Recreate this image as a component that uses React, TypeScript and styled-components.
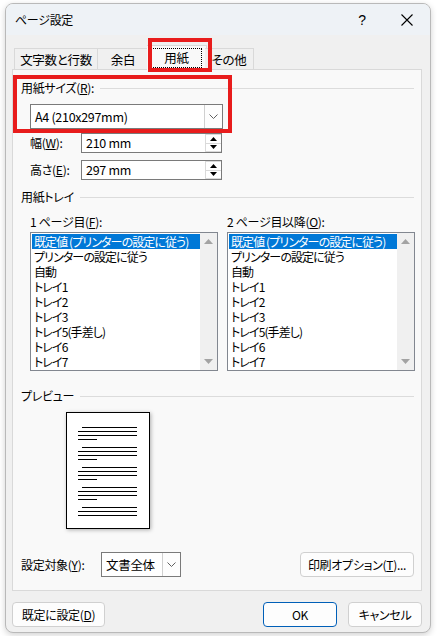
import React from 'react';
import styled, { createGlobalStyle } from 'styled-components';

const GlobalStyle = createGlobalStyle`
  html, body {
    margin: 0;
    padding: 0;
    background: #ffffff;
  }
  body {
    font-family: 'Noto Sans CJK JP', 'Noto Sans', sans-serif;
    font-size: 12px;
    font-feature-settings: 'palt';
    letter-spacing: -0.3px;
    color: #000;
  }
`;

const Screen = styled.div`
  width: 437px;
  height: 636px;
  padding: 3px 0 0 5px;
  box-sizing: border-box;
`;

const Window = styled.div`
  position: relative;
  width: 426px;
  height: 630px;
  box-sizing: border-box;
  border: 1px solid #b9b9b9;
  border-radius: 8px;
  background: #f0f0f0;
  box-shadow: 0 2px 6px rgba(0, 0, 0, 0.18);
  display: flex;
  flex-direction: column;
  overflow: hidden;
`;

const TitleBar = styled.div`
  height: 31px;
  flex: none;
  background: #eef2f6;
  display: flex;
  align-items: center;
  padding: 0 0 0 9px;
`;

const Title = styled.div`
  flex: 1;
  line-height: 16px;
`;

const TitleButton = styled.div<{ $w: number }>`
  width: ${p => p.$w}px;
  height: 31px;
  display: flex;
  align-items: center;
  justify-content: center;
  font-family: 'Liberation Sans', sans-serif;
  font-size: 14px;
`;

const Body = styled.div`
  flex: 1;
  display: flex;
  flex-direction: column;
  padding: 8px 8px 0 6px;
`;

const TabStrip = styled.div`
  display: flex;
  align-items: flex-end;
  height: 27px;
  padding-left: 2px;
  margin-bottom: -1px;
  position: relative;
  z-index: 1;
`;

const Tab = styled.div<{ $w: number; $active?: boolean }>`
  width: ${p => p.$w}px;
  height: ${p => (p.$active ? 25 : 22)}px;
  box-sizing: border-box;
  border: 1px solid #d9d9d9;
  border-bottom: ${p => (p.$active ? 'none' : '1px solid #d9d9d9')};
  margin: ${p => (p.$active ? '0 -2px' : '0')};
  background: ${p => (p.$active ? '#f9f9f9' : '#f0f0f0')};
  display: flex;
  align-items: center;
  justify-content: center;
  line-height: 16px;
  font-size: 12.5px;
  padding-top: ${p => (p.$active ? 0 : 1)}px;
  & + & {
    border-left: none;
  }
`;

const FocusRect = styled.span`
  border: 1px dotted #000;
  padding: 1px 12px;
`;

const Panel = styled.div`
  width: 410px;
  height: 522px;
  box-sizing: border-box;
  border: 1px solid #d9d9d9;
  background: #f9f9f9;
  padding: 10px 7px 0 8px;
  display: flex;
  flex-direction: column;
`;

const Heading = styled.div<{ $mt?: number }>`
  display: flex;
  align-items: center;
  gap: 6px;
  height: 16px;
  line-height: 16px;
  margin-top: ${p => p.$mt ?? 0}px;
  &::after {
    content: '';
    flex: 1;
    height: 1px;
    background: #dcdcdc;
  }
`;

const Indented = styled.div<{ $mt?: number }>`
  margin-left: 9px;
  margin-top: ${p => p.$mt ?? 0}px;
`;

const Combo = styled.div<{ $w: number; $h: number }>`
  width: ${p => p.$w}px;
  height: ${p => p.$h}px;
  box-sizing: border-box;
  border: 1px solid #7a7a7a;
  background: #fff;
  display: flex;
  align-items: stretch;
`;

const ComboText = styled.div`
  flex: 1;
  display: flex;
  align-items: center;
  padding-left: 4px;
  line-height: 16px;
  font-size: 12.5px;
  white-space: nowrap;
`;

const ComboButton = styled.div`
  width: 17px;
  border-left: 1px solid #d0d0d0;
  display: flex;
  align-items: center;
  justify-content: center;
  background: #fdfdfd;
`;

const FieldRow = styled.div<{ $mt: number }>`
  display: flex;
  align-items: center;
  height: 20px;
  margin-top: ${p => p.$mt}px;
`;

const FieldLabel = styled.div`
  width: 51px;
  line-height: 16px;
`;

const Spin = styled.div`
  width: 141px;
  height: 20px;
  box-sizing: border-box;
  border: 1px solid #7a7a7a;
  background: #fff;
  display: flex;
`;

const SpinText = styled.div`
  flex: 1;
  padding-left: 4px;
  line-height: 18px;
  font-size: 12.5px;
`;

const SpinButtons = styled.div`
  width: 16px;
  display: flex;
  flex-direction: column;
`;

const SpinHalf = styled.div`
  flex: 1;
  border: 1px solid #dadada;
  border-right: none;
  display: flex;
  align-items: center;
  justify-content: center;
  & + & {
    border-top: none;
  }
`;

const TrayGrid = styled.div`
  display: grid;
  grid-template-columns: 188px 188px;
  column-gap: 9px;
  margin: 9px 0 0 9px;
`;

const TrayLabel = styled.div`
  line-height: 16px;
  height: 16px;
  margin-bottom: 2px;
  white-space: nowrap;
`;

const ListBox = styled.div`
  height: 139px;
  box-sizing: border-box;
  border: 1px solid #828790;
  background: #fff;
  display: flex;
`;

const ListItems = styled.div`
  flex: 1;
  padding: 1px 0 0 1px;
  overflow: hidden;
`;

const ListItem = styled.div<{ $selected?: boolean }>`
  height: 15px;
  line-height: 15px;
  padding-left: 2px;
  letter-spacing: -0.9px;
  white-space: nowrap;
  background: ${p => (p.$selected ? '#0078d7' : 'transparent')};
  color: ${p => (p.$selected ? '#fff' : '#000')};
`;

const ScrollBar = styled.div`
  width: 17px;
  background: #f0f0f0;
  display: flex;
  flex-direction: column;
  justify-content: space-between;
  align-items: center;
  padding: 6px 0;
`;

const PreviewPage = styled.div`
  width: 84px;
  height: 117px;
  box-sizing: border-box;
  border: 1px solid #000;
  background: #fff;
  box-shadow: 1px 1px 4px rgba(0, 0, 0, 0.3);
  margin: 8px 0 0 45px;
`;

const BottomRow = styled.div`
  display: flex;
  align-items: center;
  margin-top: 23px;
  height: 25px;
`;

const TargetLabel = styled.div`
  width: 80px;
  line-height: 16px;
  white-space: nowrap;
`;

const Spacer = styled.div`
  flex: 1;
`;

const Button = styled.div<{ $w: number; $primary?: boolean }>`
  width: ${p => p.$w}px;
  height: 25px;
  box-sizing: border-box;
  border: 1px solid ${p => (p.$primary ? '#005fb8' : '#d0d0d0')};
  border-radius: 4px;
  background: #fdfdfd;
  display: flex;
  align-items: center;
  justify-content: center;
  line-height: 16px;
  white-space: nowrap;
`;

const Footer = styled.div`
  display: flex;
  align-items: center;
  height: 25px;
  margin-top: 11px;
  gap: 11px;
`;

const Highlight = styled.div<{ $l: number; $t: number; $w: number; $h: number }>`
  position: absolute;
  left: ${p => p.$l}px;
  top: ${p => p.$t}px;
  width: ${p => p.$w}px;
  height: ${p => p.$h}px;
  box-sizing: border-box;
  border: 4px solid #e81c1c;
  pointer-events: none;
  z-index: 5;
`;

const Chevron = () => (
  <svg width="9" height="5" viewBox="0 0 9 5">
    <path d="M0.5 0.5 L4.5 4.5 L8.5 0.5" fill="none" stroke="#606060" strokeWidth="1" />
  </svg>
);

const Tri = ({ up, color, w, h }: { up?: boolean; color: string; w: number; h: number }) => (
  <svg width={w} height={h} viewBox={`0 0 ${w} ${h}`}>
    <polygon points={up ? `0,${h} ${w / 2},0 ${w},${h}` : `0,0 ${w},0 ${w / 2},${h}`} fill={color} />
  </svg>
);

const U = ({ children }: { children: React.ReactNode }) => <u>{children}</u>;

const trayItems = [
  '既定値 (プリンターの設定に従う)',
  'プリンターの設定に従う',
  '自動',
  'トレイ1',
  'トレイ2',
  'トレイ3',
  'トレイ5(手差し)',
  'トレイ6',
  'トレイ7',
];

const TrayList = () => (
  <ListBox>
    <ListItems>
      {trayItems.map((t, i) => (
        <ListItem key={t} $selected={i === 0}>
          {t}
        </ListItem>
      ))}
    </ListItems>
    <ScrollBar>
      <Tri up color="#a3a3a3" w={9} h={5} />
      <Tri color="#a3a3a3" w={9} h={5} />
    </ScrollBar>
  </ListBox>
);

const PageLines = () => {
  const lines: React.ReactNode[] = [];
  for (let g = 0; g < 5; g++) {
    const y0 = 14.5 + g * 20;
    const count = g === 4 ? 3 : 4;
    for (let i = 0; i < count; i++) {
      const x1 = i === 0 ? 15 : 11;
      const x2 = i === 3 ? 30 : 70;
      lines.push(
        <line key={`${g}-${i}`} x1={x1} x2={x2} y1={y0 + i * 4} y2={y0 + i * 4} stroke="#000" strokeWidth="1" />
      );
    }
  }
  return (
    <svg width="82" height="115" viewBox="0 0 82 115">
      {lines}
    </svg>
  );
};

const SpinField = ({ value }: { value: string }) => (
  <Spin>
    <SpinText>{value}</SpinText>
    <SpinButtons>
      <SpinHalf>
        <Tri up color="#000" w={7} h={4} />
      </SpinHalf>
      <SpinHalf>
        <Tri color="#000" w={7} h={4} />
      </SpinHalf>
    </SpinButtons>
  </Spin>
);

export default function App() {
  return (
    <>
      <GlobalStyle />
      <Screen>
        <Window>
          <TitleBar>
            <Title>ページ設定</Title>
            <TitleButton $w={44}>?</TitleButton>
            <TitleButton $w={46}>
              <svg width="12" height="12" viewBox="0 0 12 12">
                <path d="M0.5 0.5 L11.5 11.5 M11.5 0.5 L0.5 11.5" stroke="#000" strokeWidth="1.1" />
              </svg>
            </TitleButton>
          </TitleBar>
          <Body>
            <TabStrip>
              <Tab $w={84}>文字数と行数</Tab>
              <Tab $w={51}>余白</Tab>
              <Tab $w={60} $active>
                <FocusRect>用紙</FocusRect>
              </Tab>
              <Tab $w={49}>その他</Tab>
            </TabStrip>
            <Panel>
              <Heading>
                <span>
                  用紙サイズ(<U>R</U>):
                </span>
              </Heading>
              <Indented $mt={8}>
                <Combo $w={193} $h={25}>
                  <ComboText>A4 (210x297mm)</ComboText>
                  <ComboButton>
                    <Chevron />
                  </ComboButton>
                </Combo>
              </Indented>
              <Indented>
                <FieldRow $mt={4}>
                  <FieldLabel>
                    幅(<U>W</U>):
                  </FieldLabel>
                  <SpinField value="210 mm" />
                </FieldRow>
                <FieldRow $mt={7}>
                  <FieldLabel>
                    高さ(<U>E</U>):
                  </FieldLabel>
                  <SpinField value="297 mm" />
                </FieldRow>
              </Indented>
              <Heading $mt={9}>
                <span>用紙トレイ</span>
              </Heading>
              <TrayGrid>
                <div>
                  <TrayLabel>
                    1 ページ目(<U>F</U>):
                  </TrayLabel>
                  <TrayList />
                </div>
                <div>
                  <TrayLabel>
                    2 ページ目以降(<U>O</U>):
                  </TrayLabel>
                  <TrayList />
                </div>
              </TrayGrid>
              <Heading $mt={17}>
                <span>プレビュー</span>
              </Heading>
              <PreviewPage>
                <PageLines />
              </PreviewPage>
              <BottomRow>
                <TargetLabel>
                  設定対象(<U>Y</U>):
                </TargetLabel>
                <Combo $w={80} $h={25}>
                  <ComboText>文書全体</ComboText>
                  <ComboButton>
                    <Chevron />
                  </ComboButton>
                </Combo>
                <Spacer />
                <Button $w={114}>
                  印刷オプション(<U>T</U>)...
                </Button>
              </BottomRow>
            </Panel>
            <Footer>
              <Button $w={93}>
                既定に設定(<U>D</U>)
              </Button>
              <Spacer />
              <Button $w={74} $primary>
                OK
              </Button>
              <Button $w={74}>キャンセル</Button>
            </Footer>
          </Body>
          <Highlight $l={142} $t={34} $w={64} $h={34} />
          <Highlight $l={7} $t={71} $w={219} $h={58} />
        </Window>
      </Screen>
    </>
  );
}
